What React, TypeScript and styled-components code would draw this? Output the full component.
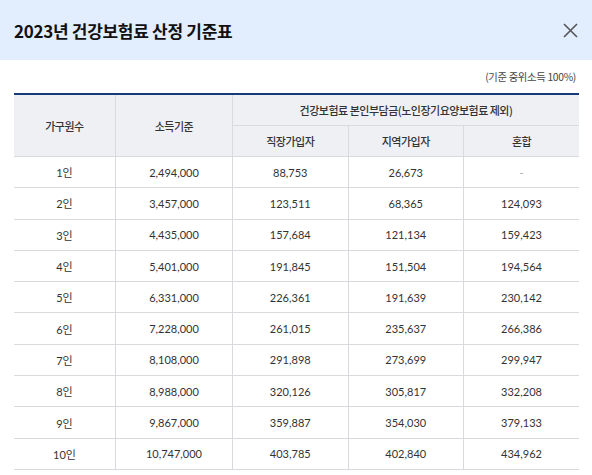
import React from "react";
import styled, { createGlobalStyle } from "styled-components";

const Global = createGlobalStyle`
  html, body { margin: 0; padding: 0; background: #fff; }
  body { font-family: "Lato", "Noto Sans CJK KR", sans-serif; color: #333; }
`;

const Page = styled.div`
  width: 592px;
  height: 475px;
  overflow: hidden;
  background: #fff;
`;

const Header = styled.header`
  height: 60px;
  background: #e2edfd;
  display: flex;
  align-items: center;
  justify-content: space-between;
  padding: 0 14px 0 14px;
  box-sizing: border-box;
`;

const Title = styled.h1`
  margin: 0;
  font-family: "Noto Sans CJK KR", sans-serif;
  font-size: 17px;
  font-weight: 700;
  color: #111;
  letter-spacing: -0.3px;
`;

const CloseButton = styled.button`
  border: 0;
  background: transparent;
  padding: 0;
  width: 16px;
  height: 16px;
  display: flex;
  align-items: center;
  justify-content: center;
  cursor: pointer;
`;

const Body = styled.div`
  padding: 10px 13px 0 14px;
`;

const Note = styled.p`
  margin: 0 3px 9px 0;
  text-align: right;
  font-family: "Noto Sans CJK KR", sans-serif;
  font-size: 10.3px;
  line-height: 14px;
  color: #444;
  letter-spacing: -0.3px;
`;

const Table = styled.table`
  width: 565px;
  border-collapse: collapse;
  table-layout: fixed;
  border-top: 2px solid #173a78;
`;

const Th = styled.th<{ $w?: number }>`
  ${(p) => (p.$w ? `width: ${p.$w}px;` : "")}
  background: #eff0f4;
  font-family: "Noto Sans CJK KR", sans-serif;
  font-weight: 500;
  font-size: 11px;
  letter-spacing: -0.5px;
  color: #333;
  height: 30px;
  padding: 0;
  border: 1px solid #d9dadd;
  border-top: 0;
  &:first-child { border-left: 0; }
  &:last-child { border-right: 0; }
`;

const Td = styled.td`
  text-align: center;
  font-family: "Lato", "Noto Sans CJK KR", sans-serif;
  font-size: 11px;
  color: #333;
  height: 30.3px;
  padding: 0;
  border: 1px solid #d9dadd;
  &:first-child { border-left: 0; }
  &:last-child { border-right: 0; }
`;

const Dash = styled.span`
  color: #aaa;
`;

const rows: [string, string, string, string, string][] = [
  ["1인", "2,494,000", "88,753", "26,673", "-"],
  ["2인", "3,457,000", "123,511", "68,365", "124,093"],
  ["3인", "4,435,000", "157,684", "121,134", "159,423"],
  ["4인", "5,401,000", "191,845", "151,504", "194,564"],
  ["5인", "6,331,000", "226,361", "191,639", "230,142"],
  ["6인", "7,228,000", "261,015", "235,637", "266,386"],
  ["7인", "8,108,000", "291,898", "273,699", "299,947"],
  ["8인", "8,988,000", "320,126", "305,817", "332,208"],
  ["9인", "9,867,000", "359,887", "354,030", "379,133"],
  ["10인", "10,747,000", "403,785", "402,840", "434,962"],
];

export default function App() {
  return (
    <Page>
      <Global />
      <Header>
        <Title>2023년 건강보험료 산정 기준표</Title>
        <CloseButton aria-label="닫기">
          <svg width="15" height="15" viewBox="0 0 15 15">
            <path d="M1 1 L14 14 M14 1 L1 14" stroke="#555" strokeWidth="1.6" fill="none" />
          </svg>
        </CloseButton>
      </Header>
      <Body>
        <Note>(기준 중위소득 100%)</Note>
        <Table>
          <thead>
            <tr>
              <Th $w={101} rowSpan={2}>가구원수</Th>
              <Th $w={116} rowSpan={2}>소득기준</Th>
              <Th colSpan={3}>건강보험료 본인부담금(노인장기요양보험료 제외)</Th>
            </tr>
            <tr>
              <Th $w={116}>직장가입자</Th>
              <Th $w={116}>지역가입자</Th>
              <Th>혼합</Th>
            </tr>
          </thead>
          <tbody>
            {rows.map((r) => (
              <tr key={r[0]}>
                {r.map((c, i) => (
                  <Td key={i}>{c === "-" ? <Dash>-</Dash> : c}</Td>
                ))}
              </tr>
            ))}
          </tbody>
        </Table>
      </Body>
    </Page>
  );
}
